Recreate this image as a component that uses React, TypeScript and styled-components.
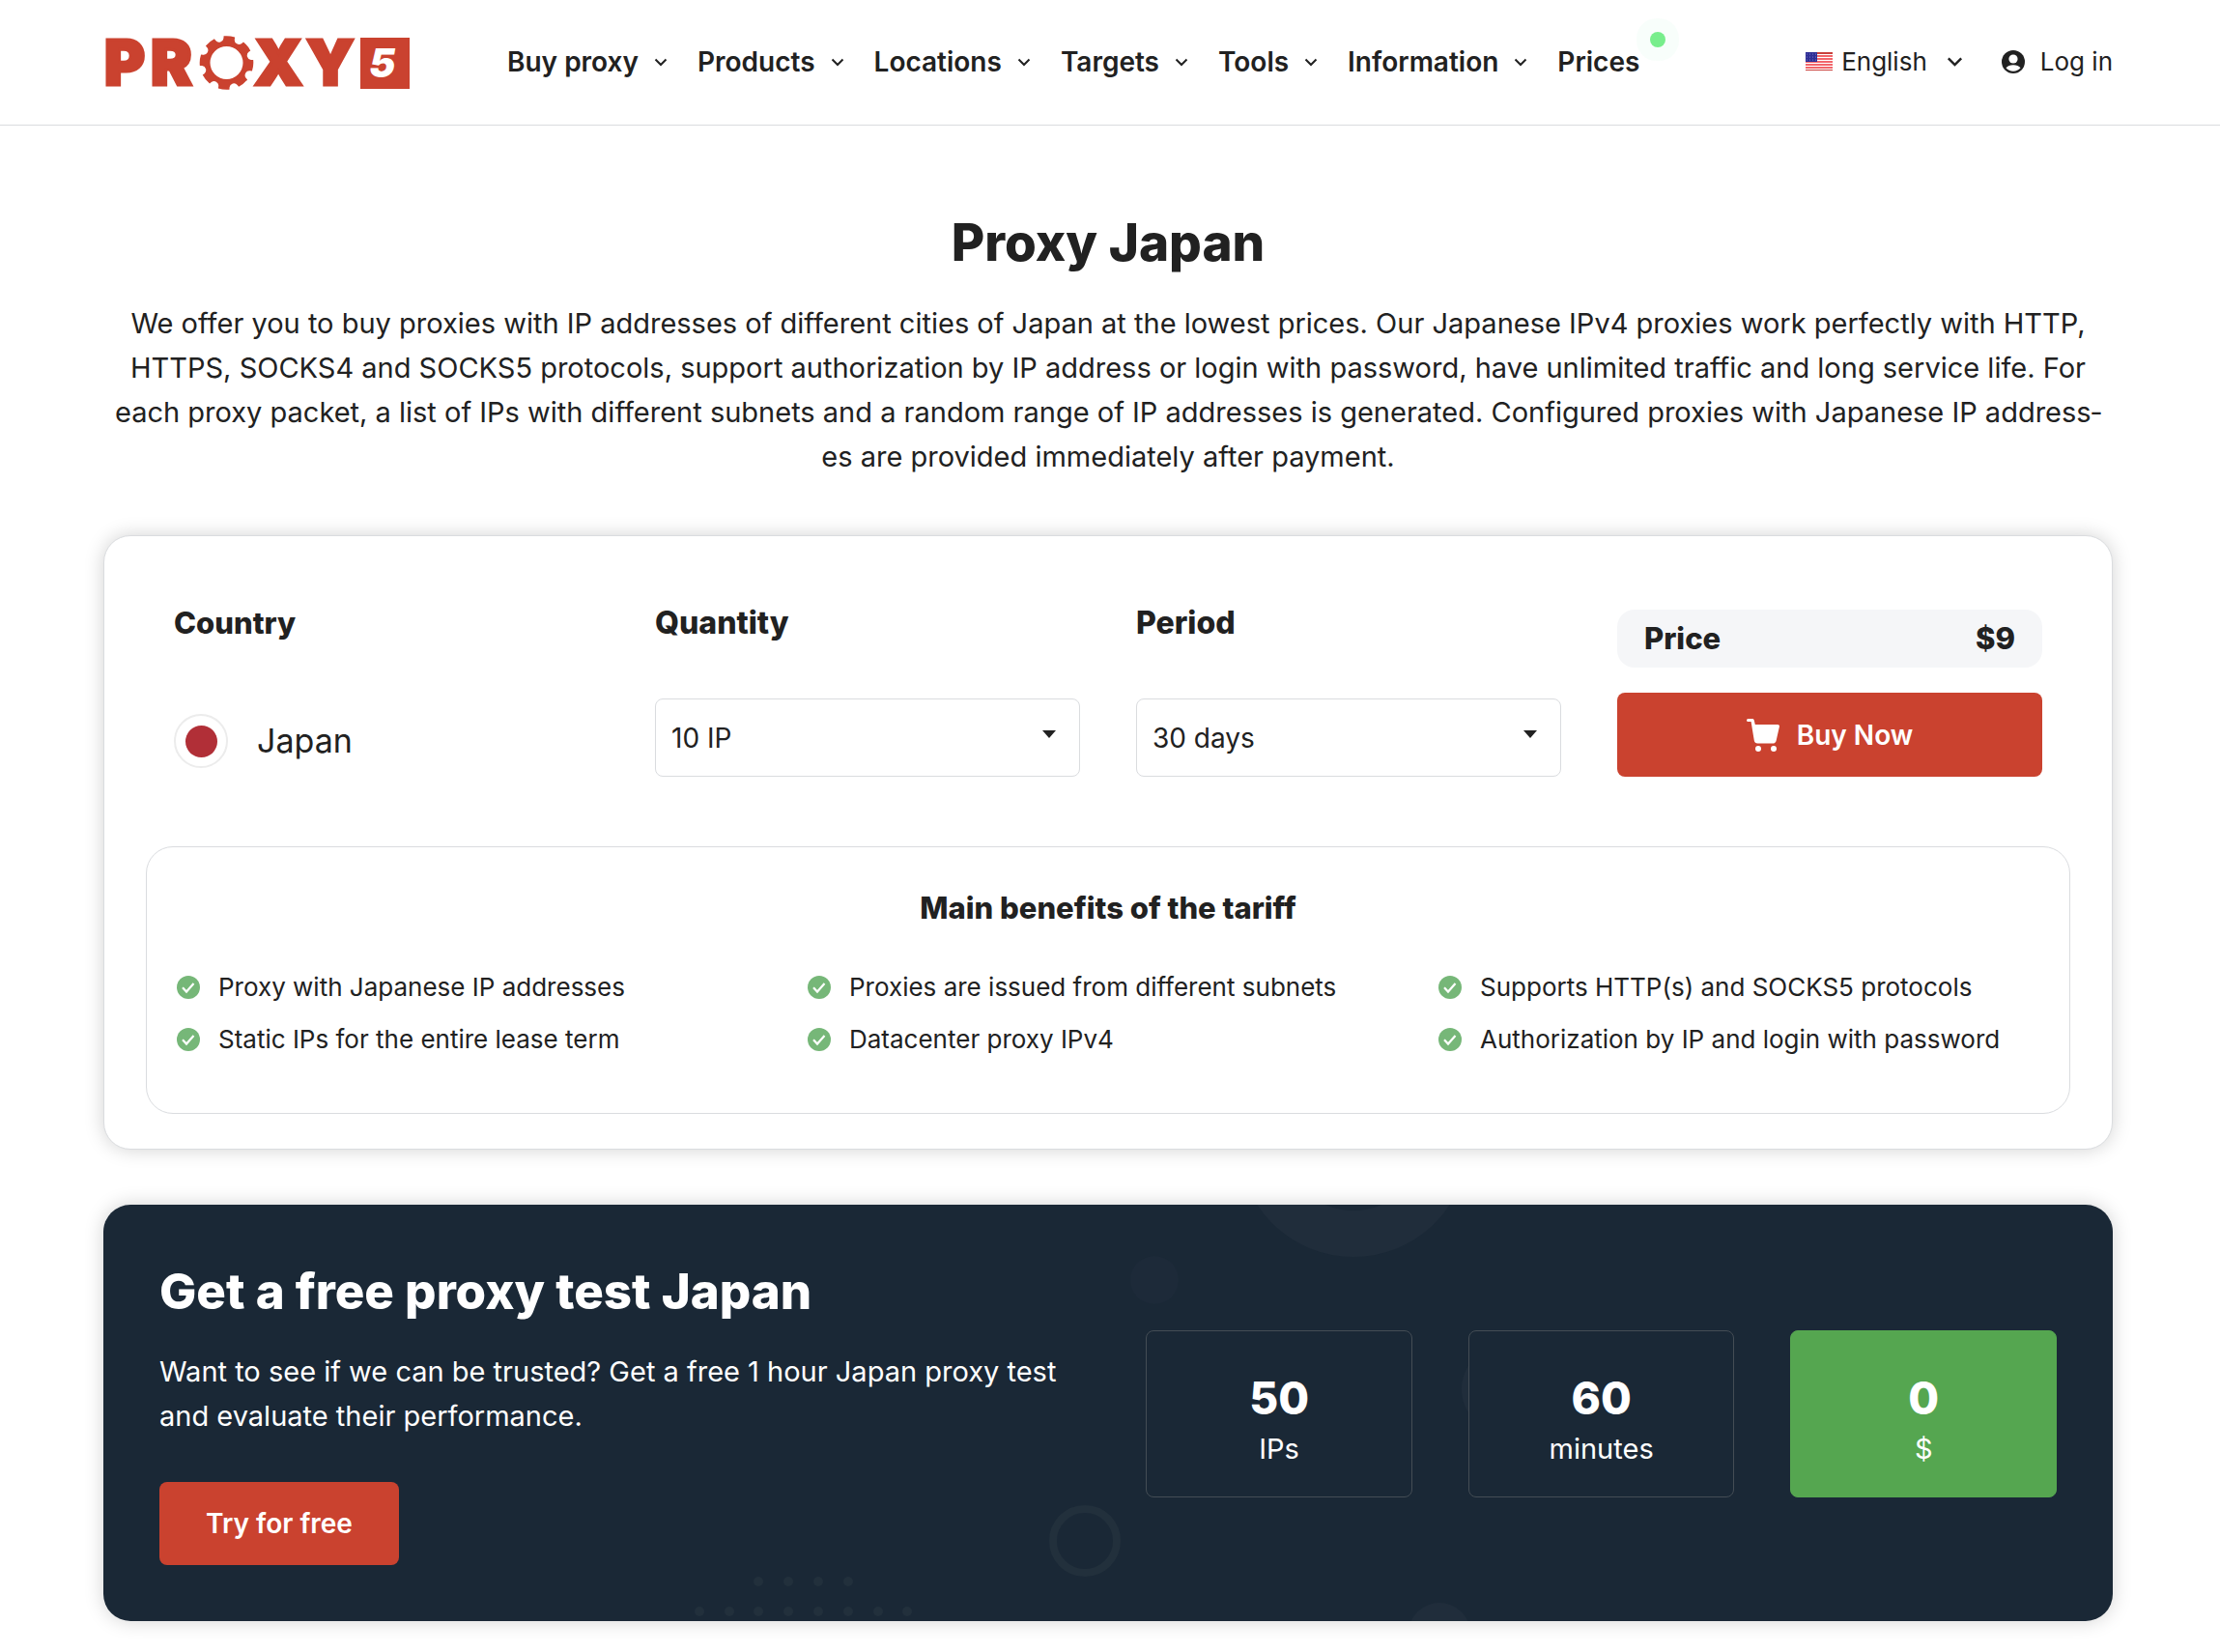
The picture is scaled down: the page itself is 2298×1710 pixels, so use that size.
import React from "react";
import styled, { createGlobalStyle, css } from "styled-components";

const color = {
  ink: "#212121",
  red: "#ca422f",
  green: "#55a650",
  tick: "#76b778",
  navy: "#1a2836",
  line: "#dadcdf",
  soft: "#f5f6f8",
  mint: "#78ee8c",
};

const GlobalStyle = createGlobalStyle`
  *, *::before, *::after { box-sizing: border-box; }
  body {
    margin: 0;
    background: #fff;
    color: ${color.ink};
    font-family: Inter, "Liberation Sans", sans-serif;
    font-size: 29px;
    line-height: 46px;
  }
  h1, h2, p, ul { margin: 0; padding: 0; }
  ul { list-style: none; }
  button, select { font: inherit; color: inherit; }
  a { color: inherit; text-decoration: none; }
`;

const Header = styled.header`
  display: flex;
  align-items: center;
  height: 130px;
  padding: 0 111px 2px 102px;
  border-bottom: 1px solid ${color.line};
`;

const LogoLink = styled.a`
  display: flex;
  flex: none;
  margin-right: 93px;
`;

const LogoSvg = styled.svg`
  display: block;
  width: 330px;
  height: 86px;
  overflow: visible;
  fill: ${color.red};
  font-family: Inter, "Liberation Sans", sans-serif;
  font-weight: 900;
`;

const NavList = styled.ul`
  display: flex;
  align-items: center;
  gap: 31px;
`;

const NavLink = styled.a`
  position: relative;
  display: flex;
  align-items: center;
  gap: 16px;
  font-size: 28px;
  font-weight: 600;
  white-space: nowrap;
`;

const Dot = styled.span`
  position: absolute;
  top: -8px;
  right: -27px;
  width: 16px;
  height: 16px;
  border-radius: 50%;
  background: ${color.mint};
  box-shadow: 0 0 0 14px rgba(120, 238, 170, 0.05);
`;

const HeaderTools = styled.div`
  display: flex;
  align-items: center;
  gap: 40px;
  margin-left: auto;
  font-size: 26px;
`;

const LanguageButton = styled.button`
  display: flex;
  align-items: center;
  padding: 0;
  border: 0;
  background: none;
  cursor: pointer;
`;

const LanguageName = styled.span`
  margin: 0 20px 0 9px;
`;

const LoginLink = styled.a`
  display: flex;
  align-items: center;
  gap: 16px;
  white-space: nowrap;
`;

const Main = styled.main`
  padding: 89px 111px 32px 107px;
`;

const PageTitle = styled.h1`
  font-size: 53px;
  line-height: 64px;
  font-weight: 800;
  text-align: center;
`;

const Intro = styled.p`
  margin-top: 29px;
  padding: 0 4px;
  text-align: center;
`;

const panel = css`
  border-radius: 28px;
  box-shadow: 0 0 20px rgba(0, 0, 0, 0.18);
`;

const OrderCard = styled.section`
  ${panel}
  margin-top: 58px;
  padding: 70px 43px 36px;
  border: 1px solid ${color.line};
  background: #fff;
`;

const OrderForm = styled.form`
  display: grid;
  grid-template-columns: repeat(4, 1fr);
  gap: 58px;
  padding: 0 29px;
`;

const Field = styled.div`
  display: flex;
  flex-direction: column;
  justify-content: flex-end;
  min-width: 0;
`;

const CountryField = styled(Field)`
  justify-content: flex-start;
  gap: 74px;
`;

const SelectField = styled(Field)`
  gap: 58px;
`;

const BuyField = styled(Field)`
  gap: 26px;
`;

const FieldTitle = styled.span`
  font-size: 31px;
  line-height: 40px;
  font-weight: 800;
`;

const FieldLabel = styled.label`
  font-size: 32px;
  line-height: 40px;
  font-weight: 800;
`;

const Country = styled.div`
  display: flex;
  align-items: center;
  gap: 30px;
  font-size: 34px;
`;

const JapanFlag = styled.span`
  display: grid;
  place-items: center;
  width: 56px;
  height: 56px;
  border: 2px solid #ececec;
  border-radius: 50%;

  &::before {
    content: "";
    width: 33px;
    height: 33px;
    border-radius: 50%;
    background: #b12f37;
  }
`;

const SelectBox = styled.div`
  position: relative;
`;

const Select = styled.select`
  display: block;
  width: 100%;
  height: 81px;
  padding: 0 48px 0 16px;
  appearance: none;
  border: 1px solid ${color.line};
  border-radius: 8px;
  background: #fff;
  font-size: 28px;
`;

const SelectArrow = styled.svg`
  position: absolute;
  top: 33px;
  right: 25px;
  width: 14px;
  height: 8px;
  fill: ${color.ink};
  pointer-events: none;
`;

const PriceRow = styled.div`
  display: flex;
  align-items: center;
  justify-content: space-between;
  height: 60px;
  padding: 0 28px;
  border-radius: 18px;
  background: ${color.soft};
`;

const RedButton = styled.button<{ $compact?: boolean }>`
  display: inline-flex;
  align-items: center;
  justify-content: center;
  gap: 18px;
  height: ${(p) => (p.$compact ? "86px" : "87px")};
  padding: 0 48px;
  border: 0;
  border-radius: 8px;
  background: ${color.red};
  color: #fff;
  font-size: 28px;
  font-weight: 600;
  cursor: pointer;
`;

const Benefits = styled.div`
  margin-top: 72px;
  padding: 43px 0 49px 31px;
  border: 1px solid ${color.line};
  border-radius: 28px;
`;

const BenefitsTitle = styled.h2`
  margin-right: 31px;
  font-size: 31px;
  line-height: 40px;
  font-weight: 800;
  text-align: center;
`;

const BenefitList = styled.ul`
  display: grid;
  grid-template-columns: repeat(3, 1fr);
  margin-top: 35px;
`;

const Benefit = styled.li`
  display: flex;
  align-items: center;
  gap: 19px;
  font-size: 26px;
  line-height: 54px;
`;

const TrialBanner = styled.section`
  ${panel}
  position: relative;
  display: flex;
  align-items: center;
  gap: 58px;
  margin-top: 57px;
  padding: 60px 58px 58px;
  background: ${color.navy};
  color: #fff;
`;

const BannerArt = styled.svg`
  position: absolute;
  inset: 0;
  width: 100%;
  height: 100%;
  border-radius: 28px;
`;

const TrialText = styled.div`
  position: relative;
  flex: 1;
`;

const TrialTitle = styled.h2`
  font-size: 51px;
  line-height: 60px;
  font-weight: 800;
`;

const TrialCopy = styled.p`
  margin: 30px 0 45px;
`;

const Stats = styled.div`
  position: relative;
  display: grid;
  flex: 0 0 48%;
  grid-template-columns: repeat(3, 1fr);
  gap: 58px;
`;

const Stat = styled.div<{ $accent?: boolean }>`
  display: flex;
  flex-direction: column;
  align-items: center;
  padding: 39px 0 26px;
  border: 1px solid ${(p) => (p.$accent ? color.green : "#444d55")};
  border-radius: 8px;
  background: ${(p) => (p.$accent ? color.green : color.navy)};
`;

const StatValue = styled.strong`
  font-size: 46px;
  line-height: 60px;
  font-weight: 800;
`;

/* Cog outline: eight flat teeth separated by round notches. */
function cogPath(cx: number, cy: number): string {
  const at = (deg: number, r: number) => {
    const a = (deg * Math.PI) / 180;
    return `${(cx + r * Math.sin(a)).toFixed(2)} ${(cy - r * Math.cos(a)).toFixed(2)}`;
  };
  let d = "";
  for (let i = 0; i < 8; i++) {
    const mid = 6 + i * 45;
    d += `${i === 0 ? "M" : "L"}${at(mid - 12, 27.8)}A27.8 27.8 0 0 1 ${at(mid + 12, 27.8)}`;
    d += `L${at(mid + 13, 25.5)}A4.6 4.6 0 0 0 ${at(mid + 32, 25.5)}`;
  }
  d += "Z";
  d += `M${cx - 17} ${cy}a17 17 0 1 0 34 0a17 17 0 1 0 -34 0Z`;
  return d;
}

const Logo = () => (
  <LogoSvg viewBox="-8 -16 330 86" role="img" aria-label="Proxy5">
    <g fontSize="64" stroke={color.red} strokeWidth="3">
      <text x="-2" y="51">P</text>
      <text x="46" y="51">R</text>
      <text x="153" y="51">X</text>
      <text x="207" y="51">Y</text>
    </g>
    <path fillRule="evenodd" d={cogPath(124.5, 28)} />
    <rect x="263" y="2" width="51" height="53" />
    <text x="272" y="43" fontSize="41" fontStyle="italic" fill="#fff">5</text>
  </LogoSvg>
);

const Chevron = ({ size }: { size: number }) => (
  <svg width={size} height={size} viewBox="0 0 14 14" fill="none" stroke={color.ink} strokeWidth="2" aria-hidden="true">
    <path d="M1.500 4.500 7 10l5.500-5.500" />
  </svg>
);

const UsFlag = () => (
  <svg width="28" height="19" viewBox="0 0 28 19" aria-hidden="true">
    <rect width="28" height="19" fill="#fff" />
    {[0, 3, 6, 9, 12, 15, 18].map((y, i) => (
      <rect key={y} y={y} width="28" height={i === 6 ? 1 : 2} fill={i === 0 || i === 6 ? "#c9413c" : "#f2666b"} />
    ))}
    <rect width="12" height="10" fill="#2f2f96" />
    {[2, 5, 8].map((y) =>
      [2, 5, 8, 11].map((x) => <circle key={`${x}-${y}`} cx={x - 0.5} cy={y} r="0.5" fill="#8c8cd0" />)
    )}
  </svg>
);

const UserIcon = () => (
  <svg width="24" height="24" viewBox="0 0 24 24" aria-hidden="true">
    <circle cx="12" cy="12" r="12" fill={color.ink} />
    <circle cx="12" cy="9" r="4.600" fill="#fff" />
    <path d="M4.500 18.300c1.500-2 4.300-3.100 7.500-3.100s6 1.100 7.500 3.100a9.800 9.800 0 0 1-15 0Z" fill="#fff" />
  </svg>
);

const CartIcon = () => (
  <svg width="34" height="34" viewBox="0 0 34 34" fill="#fff" aria-hidden="true">
    <path d="M1.500 0h4.300c1 0 1.800.7 2 1.700L8.800 6H32.200c1.200 0 2 1.100 1.700 2.300l-3.300 14.400c-.4 1.800-1.800 2.900-3.600 2.900H11.300c-1.800 0-3.200-1.200-3.500-3L4.600 3H1.500a1.500 1.500 0 0 1 0-3Z" />
    <circle cx="12" cy="31" r="3" />
    <circle cx="28" cy="31" r="3" />
  </svg>
);

const TickIcon = () => (
  <svg width="24" height="24" viewBox="0 0 24 24" fill="none" aria-hidden="true">
    <circle cx="12" cy="12" r="12" fill={color.tick} />
    <path d="M6 12.300l4 4.200 7.500-8.500" stroke="#fff" strokeWidth="2.200" />
  </svg>
);

const navItems = ["Buy proxy", "Products", "Locations", "Targets", "Tools", "Information"];

const benefits = [
  "Proxy with Japanese IP addresses",
  "Proxies are issued from different subnets",
  "Supports HTTP(s) and SOCKS5 protocols",
  "Static IPs for the entire lease term",
  "Datacenter proxy IPv4",
  "Authorization by IP and login with password",
];

const stats = [
  { value: "50", unit: "IPs" },
  { value: "60", unit: "minutes" },
  { value: "0", unit: "$", accent: true },
];

const upperDots = [678, 709, 740, 771];
const lowerDots = [617, 648, 678, 709, 740, 771, 802, 832];

export default function App() {
  return (
    <>
      <GlobalStyle />
      <Header>
        <LogoLink href="#">
          <Logo />
        </LogoLink>
        <nav>
          <NavList>
            {navItems.map((name) => (
              <li key={name}>
                <NavLink href="#">
                  {name}
                  <Chevron size={14} />
                </NavLink>
              </li>
            ))}
            <li>
              <NavLink href="#">
                Prices
                <Dot />
              </NavLink>
            </li>
          </NavList>
        </nav>
        <HeaderTools>
          <LanguageButton type="button">
            <UsFlag />
            <LanguageName>English</LanguageName>
            <Chevron size={17} />
          </LanguageButton>
          <LoginLink href="#">
            <UserIcon />
            Log in
          </LoginLink>
        </HeaderTools>
      </Header>

      <Main>
        <PageTitle>Proxy Japan</PageTitle>
        <Intro>
          We offer you to buy proxies with IP addresses of different cities of Japan at the lowest prices. Our
          Japanese IPv4 proxies work perfectly with HTTP, HTTPS, SOCKS4 and SOCKS5 protocols, support authorization
          by IP address or login with password, have unlimited traffic and long service life. For each proxy packet,
          a list of IPs with different subnets and a random range of IP addresses is generated. Configured proxies
          with Japanese IP address&shy;es are provided immediately after payment.
        </Intro>

        <OrderCard>
          <OrderForm>
            <CountryField>
              <FieldTitle>Country</FieldTitle>
              <Country>
                <JapanFlag />
                Japan
              </Country>
            </CountryField>
            <SelectField>
              <FieldLabel htmlFor="quantity">Quantity</FieldLabel>
              <SelectBox>
                <Select id="quantity" defaultValue="10 IP">
                  <option>10 IP</option>
                </Select>
                <SelectArrow viewBox="0 0 14 8" aria-hidden="true">
                  <path d="M0 0h14L7 8Z" />
                </SelectArrow>
              </SelectBox>
            </SelectField>
            <SelectField>
              <FieldLabel htmlFor="period">Period</FieldLabel>
              <SelectBox>
                <Select id="period" defaultValue="30 days">
                  <option>30 days</option>
                </Select>
                <SelectArrow viewBox="0 0 14 8" aria-hidden="true">
                  <path d="M0 0h14L7 8Z" />
                </SelectArrow>
              </SelectBox>
            </SelectField>
            <BuyField>
              <PriceRow>
                <FieldTitle>Price</FieldTitle>
                <FieldTitle>$9</FieldTitle>
              </PriceRow>
              <RedButton type="button">
                <CartIcon />
                Buy Now
              </RedButton>
            </BuyField>
          </OrderForm>
          <Benefits>
            <BenefitsTitle>Main benefits of the tariff</BenefitsTitle>
            <BenefitList>
              {benefits.map((text) => (
                <Benefit key={text}>
                  <TickIcon />
                  {text}
                </Benefit>
              ))}
            </BenefitList>
          </Benefits>
        </OrderCard>

        <TrialBanner>
          <BannerArt viewBox="0 0 2080 431" preserveAspectRatio="xMidYMid slice" aria-hidden="true">
            <circle cx="1294" cy="-65" r="95" fill="none" stroke="#202d3b" strokeWidth="48" />
            <circle cx="1088" cy="78" r="25" fill="#1d2a39" />
            <circle cx="1016" cy="348" r="33" fill="none" stroke="#22303c" strokeWidth="8" />
            <circle cx="1451" cy="191" r="45" fill="#202d3b" />
            <circle cx="1383" cy="444" r="32" fill="#202d3b" />
            {upperDots.map((x) => (
              <circle key={x} cx={x} cy="390" r="5" fill="#22303c" />
            ))}
            {lowerDots.map((x) => (
              <circle key={x} cx={x} cy="421" r="5" fill="#22303c" />
            ))}
          </BannerArt>
          <TrialText>
            <TrialTitle>Get a free proxy test Japan</TrialTitle>
            <TrialCopy>
              Want to see if we can be trusted? Get a free 1 hour Japan proxy test and evaluate their performance.
            </TrialCopy>
            <RedButton type="button" $compact>
              Try for free
            </RedButton>
          </TrialText>
          <Stats>
            {stats.map((s) => (
              <Stat key={s.unit} $accent={s.accent}>
                <StatValue>{s.value}</StatValue>
                <span>{s.unit}</span>
              </Stat>
            ))}
          </Stats>
        </TrialBanner>
      </Main>
    </>
  );
}
